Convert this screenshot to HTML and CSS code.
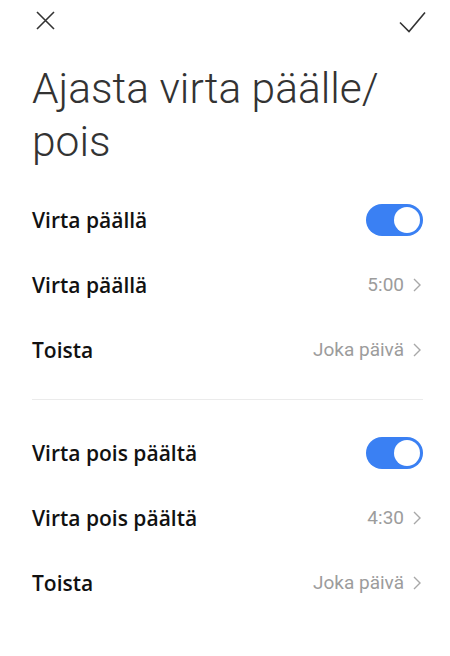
FILE: index.html
```html
<!DOCTYPE html>
<html lang="fi">
<head>
    <meta charset="UTF-8">
    <meta name="viewport" content="width=device-width, initial-scale=1.0">
    <title>Ajasta virta</title>
    <link rel="stylesheet" href="styles.css">
</head>
<body>
    <div class="topbar">
        <button class="icon-btn" aria-label="Sulje">
            <svg width="19" height="19" viewBox="0 0 19 19"><path d="M1 1L18 18M18 1L1 18" stroke="#333" stroke-width="1.6" fill="none"/></svg>
        </button>
        <button class="icon-btn" aria-label="Valmis">
            <svg width="27" height="22" viewBox="0 0 27 22"><path d="M1 11.5L10 20.5L26 1.5" stroke="#333" stroke-width="1.6" fill="none"/></svg>
        </button>
    </div>

    <h1 class="title">Ajasta virta päälle/ pois</h1>

    <div class="section">
        <div class="row">
            <span class="label">Virta päällä</span>
            <span class="switch on"><span class="knob"></span></span>
        </div>
        <div class="row">
            <span class="label">Virta päällä</span>
            <span class="value">5:00 <svg class="chev" width="8" height="14" viewBox="0 0 8 14"><path d="M1 1L7 7L1 13" stroke="#a8a8a8" stroke-width="1.4" fill="none"/></svg></span>
        </div>
        <div class="row">
            <span class="label">Toista</span>
            <span class="value">Joka päivä <svg class="chev" width="8" height="14" viewBox="0 0 8 14"><path d="M1 1L7 7L1 13" stroke="#a8a8a8" stroke-width="1.4" fill="none"/></svg></span>
        </div>
    </div>

    <hr class="divider">

    <div class="section">
        <div class="row">
            <span class="label">Virta pois päältä</span>
            <span class="switch on"><span class="knob"></span></span>
        </div>
        <div class="row">
            <span class="label">Virta pois päältä</span>
            <span class="value">4:30 <svg class="chev" width="8" height="14" viewBox="0 0 8 14"><path d="M1 1L7 7L1 13" stroke="#a8a8a8" stroke-width="1.4" fill="none"/></svg></span>
        </div>
        <div class="row">
            <span class="label">Toista</span>
            <span class="value">Joka päivä <svg class="chev" width="8" height="14" viewBox="0 0 8 14"><path d="M1 1L7 7L1 13" stroke="#a8a8a8" stroke-width="1.4" fill="none"/></svg></span>
        </div>
    </div>
</body>
</html>
```

FILE: styles.css
```css
body {
    margin: 0;
    padding: 0 27px 0 32px;
    font-family: 'Roboto', 'Noto Sans', sans-serif;
    background: #fff;
    color: #111;
}
.topbar {
    height: 44px;
    display: flex;
    justify-content: space-between;
    align-items: center;
}
.icon-btn {
    background: none;
    border: none;
    padding: 0;
    display: flex;
    cursor: pointer;
}
.icon-btn:first-child { margin-left: 4px; margin-top: -4px; }
.icon-btn:last-child { margin-right: -3px; margin-top: -1px; }
.title {
    font-weight: 300;
    font-size: 42.5px;
    line-height: 53px;
    color: #333;
    margin: 18px 0 19px 0;
    max-width: 380px;
}
.row {
    height: 65px;
    display: flex;
    justify-content: space-between;
    align-items: center;
}
.label {
    font-family: 'Open Sans', 'Roboto', sans-serif;
    font-size: 21px;
    font-weight: 600;
    color: #111;
}
.value {
    font-size: 19px;
    color: #9c9c9c;
    display: flex;
    align-items: center;
    gap: 9px;
}
.chev {
    margin-right: 2px;
}
.switch {
    width: 57px;
    height: 32px;
    border-radius: 16px;
    background: #d8d8d8;
    display: flex;
    align-items: center;
    padding: 0 3px;
    box-sizing: border-box;
}
.switch.on {
    background: #3a80f3;
    justify-content: flex-end;
}
.knob {
    width: 26px;
    height: 26px;
    border-radius: 50%;
    background: #fff;
}
.divider {
    border: none;
    border-top: 1px solid #ebebeb;
    margin: 17px 0 20px 0;
}
```
